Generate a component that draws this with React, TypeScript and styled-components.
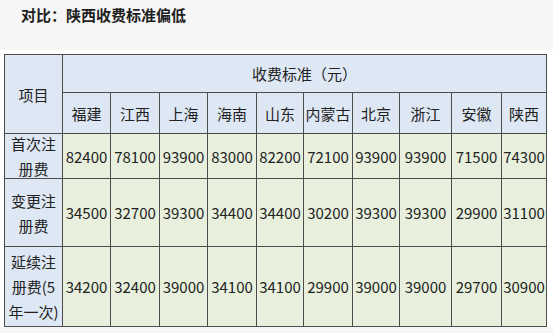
import React from 'react'
import styled, { createGlobalStyle } from 'styled-components'

const GlobalStyle = createGlobalStyle`
  html, body {
    margin: 0;
    padding: 0;
    background: #f6f6f6;
  }
  body {
    font-family: "Noto Sans CJK SC", "Noto Sans", sans-serif;
    color: #222;
  }
`

const Title = styled.h1`
  margin: 0;
  height: 50px;
  padding: 5px 0 0 21px;
  box-sizing: border-box;
  font-size: 15px;
  line-height: 20px;
  font-weight: 700;
  color: #1e1e1e;
`

const Band = styled.div`
  background: #ffffff;
  padding: 4px 0 0 4px;
`

const Grid = styled.div`
  display: inline-grid;
  grid-template-columns: 57px 47px 48px 47px 48px 46px 48px 46px 51px 49px 44px;
  grid-template-rows: 37px 40px 44px 67px 79px;
  gap: 1px;
  border: 1px solid #4d4d4d;
  background: #4d4d4d;
`

const Cell = styled.div<{ $kind: 'head' | 'data'; $col?: string; $row?: string }>`
  display: flex;
  align-items: center;
  justify-content: center;
  text-align: center;
  white-space: nowrap;
  font-size: 15px;
  line-height: 25px;
  color: #222;
  background: ${(p) => (p.$kind === 'head' ? '#dee8f4' : '#e8f0dd')};
  grid-column: ${(p) => p.$col ?? 'auto'};
  grid-row: ${(p) => p.$row ?? 'auto'};
`

const Label = styled(Cell)`
  background: #dee8f4;
`

const provinces = ['福建', '江西', '上海', '海南', '山东', '内蒙古', '北京', '浙江', '安徽', '陕西']

const rows: { label: React.ReactNode; values: number[] }[] = [
  {
    label: <>首次注<br />册费</>,
    values: [82400, 78100, 93900, 83000, 82200, 72100, 93900, 93900, 71500, 74300],
  },
  {
    label: <>变更注<br />册费</>,
    values: [34500, 32700, 39300, 34400, 34400, 30200, 39300, 39300, 29900, 31100],
  },
  {
    label: <>延续注<br />册费(5<br />年一次)</>,
    values: [34200, 32400, 39000, 34100, 34100, 29900, 39000, 39000, 29700, 30900],
  },
]

const App = () => {
  return (
    <>
      <GlobalStyle />
      <Title>对比：陕西收费标准偏低</Title>
      <Band>
        <Grid>
          <Cell $kind='head' $col='1' $row='1 / span 2'>项目</Cell>
          <Cell $kind='head' $col='2 / span 10' $row='1'>收费标准（元）</Cell>
          {provinces.map((p) => (
            <Cell key={p} $kind='head'>{p}</Cell>
          ))}
          {rows.map((r, i) => (
            <React.Fragment key={i}>
              <Label $kind='head'>{r.label}</Label>
              {r.values.map((v, j) => (
                <Cell key={j} $kind='data'>{v}</Cell>
              ))}
            </React.Fragment>
          ))}
        </Grid>
      </Band>
    </>
  )
}

export default App
